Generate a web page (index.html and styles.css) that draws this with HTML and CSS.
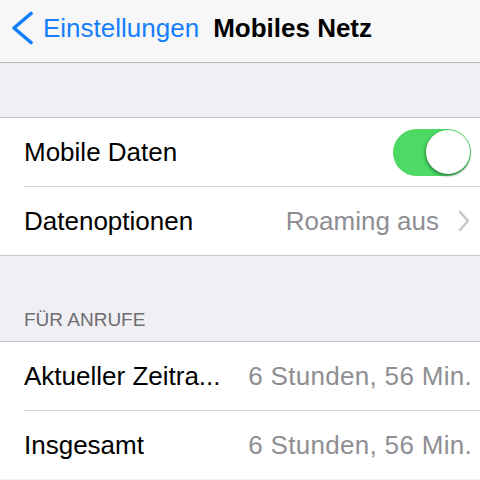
FILE: index.html
```html
<!DOCTYPE html>
<html lang="de">
<head>
<meta charset="utf-8">
<title>Mobiles Netz</title>
<link rel="stylesheet" href="styles.css">
</head>
<body>
<header class="nav">
  <svg class="back-chevron" width="22" height="34" viewBox="0 0 22 34" aria-hidden="true">
    <path d="M20 2.5 L3 17 L20 31.5" fill="none" stroke="#157efb" stroke-width="3.6" stroke-linecap="round" stroke-linejoin="round"/>
  </svg>
  <span class="back-label">Einstellungen</span>
  <span class="nav-title">Mobiles Netz</span>
</header>

<div class="spacer"></div>

<section class="group">
  <div class="row">
    <div class="row-inner">
      <span class="label">Mobile Daten</span>
      <span class="toggle"><span class="knob"></span></span>
    </div>
  </div>
  <div class="row">
    <div class="row-inner last">
      <span class="label">Datenoptionen</span>
      <span class="detail">
        <span class="value">Roaming aus</span>
        <svg class="disclosure" width="12" height="22" viewBox="0 0 12 22" aria-hidden="true">
          <path d="M2 2 L10 11 L2 20" fill="none" stroke="#c7c7cc" stroke-width="2.6" stroke-linecap="round" stroke-linejoin="round"/>
        </svg>
      </span>
    </div>
  </div>
</section>

<div class="section-header">FÜR ANRUFE</div>

<section class="group open-bottom">
  <div class="row">
    <div class="row-inner">
      <span class="label">Aktueller Zeitra...</span>
      <span class="value time">6 Stunden, 56 Min.</span>
    </div>
  </div>
  <div class="row">
    <div class="row-inner last">
      <span class="label">Insgesamt</span>
      <span class="value time">6 Stunden, 56 Min.</span>
    </div>
  </div>
</section>
</body>
</html>
```

FILE: styles.css
```css
html, body {
  margin: 0;
  padding: 0;
}
body {
  background: #efeff4;
  font-family: "Liberation Sans", Arial, sans-serif;
  font-size: 26px;
  color: #000;
  width: 480px;
  height: 480px;
  overflow: hidden;
}
.nav {
  box-sizing: border-box;
  background: #f7f7f8;
  border-bottom: 1px solid #b9b9bd;
  display: flex;
  align-items: center;
  padding: 0 0 6px 11px;
  height: 63px;
}
.back-chevron {
  flex: none;
  margin-right: 10px;
}
.back-label {
  color: #157efb;
  margin-right: 14px;
}
.nav-title {
  font-weight: bold;
}
.spacer {
  height: 54px;
}
.group {
  background: #fff;
  border-top: 1px solid #c8c7cc;
  border-bottom: 1px solid #c8c7cc;
}
.group.open-bottom {
  border-bottom: none;
}
.row {
  padding-left: 24px;
}
.row-inner {
  height: 68px;
  border-bottom: 1px solid #d6d6da;
  display: flex;
  align-items: center;
  justify-content: space-between;
  padding-right: 9px;
  white-space: nowrap;
}
.row-inner.last {
  border-bottom: none;
}
.value {
  color: #8e8e93;
}
.value.time {
  letter-spacing: 0.3px;
  margin-right: -1px;
}
.detail {
  display: flex;
  align-items: center;
  gap: 19px;
  padding-right: 1px;
}
.disclosure {
  flex: none;
}
.toggle {
  position: relative;
  width: 78px;
  height: 47px;
  border-radius: 24px;
  background: #4cd964;
  flex: none;
}
.knob {
  position: absolute;
  right: 1px;
  top: 1.5px;
  width: 44px;
  height: 44px;
  border-radius: 50%;
  background: #fff;
  box-shadow: 0 2px 3px rgba(0, 0, 0, 0.3), -2px 1px 3px rgba(0, 0, 0, 0.15);
}
.section-header {
  height: 85px;
  box-sizing: border-box;
  display: flex;
  align-items: flex-end;
  padding: 0 0 10px 24px;
  font-size: 19px;
  line-height: 22px;
  color: #6d6d72;
}
```
